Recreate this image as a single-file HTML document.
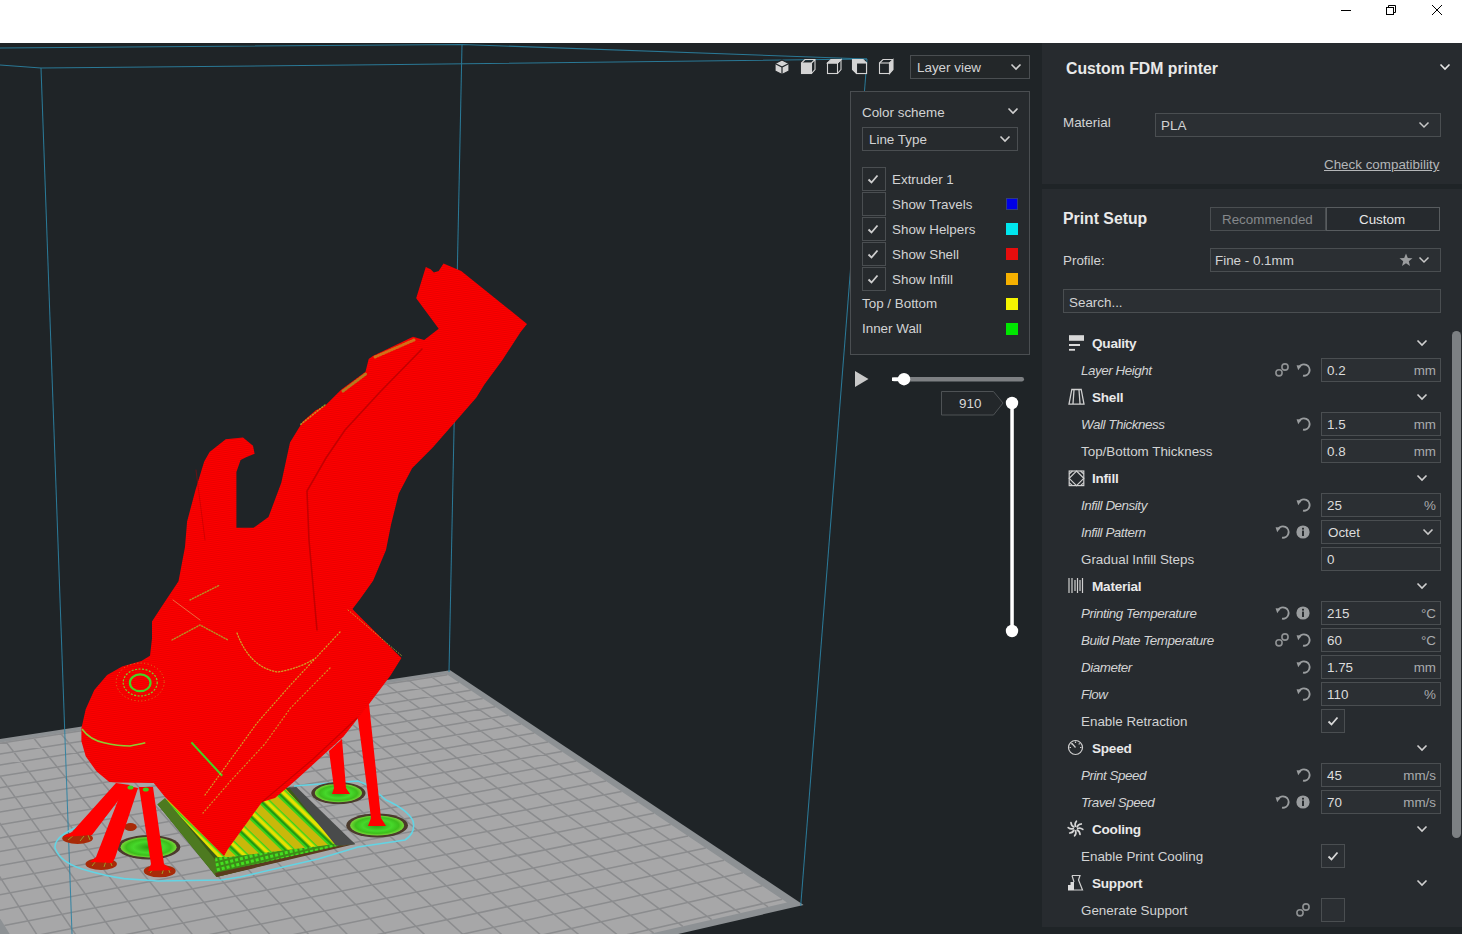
<!DOCTYPE html>
<html><head><meta charset="utf-8">
<style>
*{box-sizing:border-box;margin:0;padding:0}
html,body{width:1462px;height:934px;overflow:hidden;background:#1f2427;font-family:"Liberation Sans",sans-serif;position:relative}
#top{position:absolute;left:0;top:0;width:1462px;height:43px;background:#fff}
.sec{position:absolute;left:1042px;width:420px;background:#272b2f}
.t{position:absolute;white-space:nowrap;color:#d2d3d4;font-size:13.4px;line-height:16px;transform:translateY(1px)}
.b{font-weight:bold;color:#e9e9e9}
.i{font-style:italic;letter-spacing:-0.45px}
.box{position:absolute;border:1px solid #4a4e51;background:#2b2f33}
.ic{position:absolute;overflow:visible}
</style></head><body>
<div id="top">
<svg width="1462" height="43" style="position:absolute;left:0;top:0">
<line x1="1341" y1="10.5" x2="1351" y2="10.5" stroke="#000" stroke-width="1"/>
<rect x="1386.5" y="7.5" width="7" height="7" fill="none" stroke="#000"/>
<path d="M1388.5 7.5 V5.5 H1395.5 V12.5 H1393.5" fill="none" stroke="#000"/>
<path d="M1432 5 L1442 15 M1442 5 L1432 15" stroke="#000" stroke-width="1"/>
</svg>
</div>
<svg width="1042" height="891" viewBox="0 43 1042 891" style="position:absolute;left:0;top:43px">
<rect x="0" y="43" width="1042" height="891" fill="#1f2427"/>
<polygon points="450.2,670.3 803.6,905.0 79.1,1072.5 -110.4,755.9" fill="#8d9194"/>
<polygon points="446.4,674.1 787.0,902.4 88.6,1062.7 -98.4,757.7" fill="#a7a7a8"/>
<path d="M447.3 674.7L-98.0 758.4M458.9 682.4L-91.9 768.4M470.7 690.3L-85.6 778.5M482.8 698.5L-79.2 789.0M495.2 706.8L-72.7 799.7M507.9 715.3L-65.9 810.7M520.9 724.0L-59.0 822.0M534.3 733.0L-51.8 833.7M547.9 742.1L-44.5 845.7M561.9 751.5L-36.9 858.0M576.3 761.1L-29.2 870.7M591.0 771.0L-21.2 883.7M606.1 781.1L-12.9 897.2M621.6 791.5L-4.4 911.1M637.6 802.2L4.4 925.4M653.9 813.2L13.4 940.1M670.7 824.5L22.8 955.4M688.0 836.1L32.4 971.1M705.8 848.0L42.4 987.4M724.1 860.2L52.7 1004.2M742.9 872.8L63.3 1021.6M762.3 885.8L74.4 1039.6M782.2 899.2L85.8 1058.3M-78.6 754.7L115.1 1056.6M-50.1 750.3L153.2 1047.9M-21.9 746.0L190.6 1039.3M5.9 741.7L227.3 1030.9M33.3 737.5L263.5 1022.6M60.5 733.3L299.0 1014.4M87.3 729.2L333.9 1006.4M113.7 725.2L368.3 998.5M139.9 721.1L402.1 990.8M165.7 717.2L435.3 983.2M191.3 713.3L468.0 975.7M216.5 709.4L500.1 968.3M241.4 705.5L531.8 961.0M266.1 701.8L563.0 953.9M290.5 698.0L593.6 946.8M314.5 694.3L623.8 939.9M338.3 690.7L653.6 933.1M361.9 687.1L682.8 926.4M385.2 683.5L711.7 919.7M408.2 680.0L740.0 913.2M430.9 676.5L768.0 906.8" stroke="#8b8c8e" stroke-width="1.5" fill="none"/>

<!-- volume lines -->
<g stroke="#2c82a2" stroke-width="1.05" fill="none" opacity="0.9">
<polyline points="0,48 462,44.5 867,59"/>
<polyline points="0,65 41,68 400,64.6 867,59"/>
<line x1="41" y1="68" x2="72" y2="934"/>
<line x1="462" y1="44" x2="449" y2="672"/>
<line x1="867" y1="59" x2="800.7" y2="906"/>
</g>
<defs>
<pattern id="rp" width="4" height="2" patternUnits="userSpaceOnUse" patternTransform="rotate(-8)">
<rect width="4" height="2" fill="#ff0000"/>
<rect y="1" width="4" height="1" fill="#ea0000"/>
</pattern>
<pattern id="raftp" width="18" height="18" patternUnits="userSpaceOnUse" patternTransform="rotate(-46)">
<rect width="18" height="18" fill="#e6e000"/>
<rect x="0" width="2.5" height="18" fill="#1f9a10"/>
<rect x="6.5" width="1.5" height="18" fill="#3ad21c"/>
<rect x="8" width="8" height="18" fill="#c9b80a"/>
<rect x="16" width="2" height="18" fill="#3ad21c"/>
</pattern>
<pattern id="meshp" width="5" height="5" patternUnits="userSpaceOnUse" patternTransform="rotate(-14)">
<rect width="5" height="5" fill="#3c8c18"/>
<rect width="3" height="3" fill="#44e020"/>
</pattern>
<radialGradient id="padg">
<stop offset="0" stop-color="#2a9a12"/><stop offset="0.55" stop-color="#46d82a"/><stop offset="0.8" stop-color="#3cbe1c"/><stop offset="1" stop-color="#7ad83a"/>
</radialGradient>
</defs>
<!-- skirt outline -->
<path d="M107 817 L80 826 Q54 836 55 848 Q60 862 82 869 Q105 876 124 878.6 L158 881 L221 880 L240 877 L318 859 L358 847 L405 840 Q416 833 413 821 Q408 810 386 800 L370 786 L358 781 L294 786" fill="none" stroke="#62d4e4" stroke-width="1.6"/>
<!-- raft -->
<polygon points="157.4,804.2 216.5,877.1 337,846.4 355,843.9 290.3,787.5" fill="#3b5a18"/>
<polygon points="165,800 222,862 337,844 286,789" fill="url(#raftp)"/>
<polygon points="157.4,804.2 216.5,877.1 222,868 165,798" fill="#4d7a20"/>
<polygon points="215,857 229,857 336,844 340,846.4 216.5,877.1" fill="url(#meshp)"/>
<polygon points="215,873 216.5,877.1 355,843.9 338,846" fill="#5a3a1e"/>
<polygon points="288.9,787.5 296.4,787 355.3,844.2 336,845.8" fill="#494b4b"/>
<!-- pads -->
<g>
<ellipse cx="148.6" cy="847.2" rx="31.7" ry="12.2" fill="#4b3a2c"/>
<ellipse cx="148.6" cy="847.2" rx="28" ry="10.2" fill="url(#padg)"/>
<ellipse cx="338.4" cy="793.1" rx="27.2" ry="11" fill="#4b3a2c"/>
<ellipse cx="338.4" cy="793.1" rx="23.6" ry="9.2" fill="url(#padg)"/>
<ellipse cx="377.1" cy="825.4" rx="30.9" ry="12" fill="#4b3a2c"/>
<ellipse cx="377.1" cy="825.4" rx="27" ry="10" fill="url(#padg)"/>
</g>
<!-- feet -->
<g fill="#a82a08">
<ellipse cx="77.6" cy="838.2" rx="15.3" ry="5.9"/>
<ellipse cx="101.2" cy="864" rx="15.7" ry="5.9"/>
<ellipse cx="159.7" cy="871" rx="16" ry="6.3"/>
<ellipse cx="130.5" cy="827" rx="6.3" ry="4"/>
</g>
<g fill="none" stroke="#9acd32" stroke-width="1" opacity="0.7">
<path d="M68 840 L74 835 M80 841 L84 836 M90 840 L88 835"/>
<path d="M92 866 L96 861 M104 867 L106 861 M112 866 L110 861"/>
<path d="M150 873 L154 868 M162 874 L164 868 M170 873 L168 868"/>
</g>
<!-- legs -->
<g fill="#ff0000">
<polygon points="116,783 130,785 92,835 63,837 72,832"/>
<polygon points="124,785 138,788 115,858 112,863 90,862 96,857"/>
<polygon points="139,787 153,787 164,864 172,870 148,871 151,864"/>
<polygon points="357,712 369,704 381,818 386,826 368,826 371,818"/>
<polygon points="329,751 342,739 346,788 350,794 332,794 334,788"/>
</g>
<g fill="#3ad21c"><ellipse cx="130.5" cy="787.4" rx="3" ry="2"/><ellipse cx="145.8" cy="789.5" rx="3" ry="2"/></g>
<!-- main body -->
<polygon fill="url(#rp)" points="243,437.6 253,445.7 254.6,453.7 246.6,457 240.6,460 236.4,472 236.4,527.8 253.5,527.8 268.5,517 281.3,482.8 290,442.4 302.8,421.6 315.7,410.3 325.3,405.5 341.4,389.4 365.5,371.8 368.7,358.9 372.8,356 400,342.9 413,336.7 424.2,340 438.7,328.7 416.2,298.2 425.8,266.9 430.6,269.3 433.9,272.5 438.7,270.9 443.5,263.6 461.2,270.9 527,323.9 520.6,331.9 502.1,360.5 484.4,384.6 476.4,397.5 455.5,421.6 433,447.3 412.1,468.2 398.8,493.4 391.1,524.3 386,550 373.1,580.8 360.3,598.8 352.5,609.1 355,611.7 401.4,658 390.7,675.3 369.5,703.6 360.1,715.4 343.6,736.6 307,770 296,780 275,798 262,802 228,849 224,856 165,797 153.7,783 116,782.5 109.3,782 96.4,771.3 85.7,756.3 81.4,741.3 81.4,728.5 85.7,709.2 94.3,690 107.1,675 122.1,666.4 141.4,661 150,655.7 152,638.5 152,621.4 161.4,607 178.5,581.3 185,547 187.1,521.4 195.7,489.3 204.2,461.4 209.6,452 225.7,439.2"/>
<!-- head details -->
<g fill="none">
<ellipse cx="140.2" cy="682.8" rx="10.3" ry="8.4" stroke="#44d424" stroke-width="2.2"/>
<ellipse cx="140.2" cy="682.5" rx="17" ry="13.5" stroke="#7ccf2a" stroke-width="1.2" stroke-dasharray="2 1.5"/>
<ellipse cx="140.2" cy="682" rx="24" ry="19" stroke="#b8c830" stroke-width="0.8" stroke-dasharray="1 2.5" opacity="0.8"/>
<path d="M82 729 Q90 740 104 742.7 Q118 746 130 746 Q140 744 145.3 742.7" stroke="#8ccc30" stroke-width="1.6"/>
<path d="M191.4 742.4 L222.2 775.8" stroke="#44d424" stroke-width="2"/>
</g>
<!-- body details -->
<g fill="none" stroke-linecap="round">
<path d="M422 349 L380 392 L345 430 L326 458 L307 491 L309 540 L317 630" stroke="#b80000" stroke-width="1.6" opacity="0.8"/>
<path d="M375 357 L414 340" stroke="#b8c828" stroke-width="3" stroke-dasharray="1 2" opacity="0.55"/>
<path d="M343 391 L367 373" stroke="#8ccc30" stroke-width="3" stroke-dasharray="1.2 1.8" opacity="0.6"/>
<path d="M325 405 L300 425" stroke="#b8c828" stroke-width="1.6" stroke-dasharray="1 2" opacity="0.7"/>
<path d="M340 632 L290.5 685 L257 723 L231 759 L205 795" stroke="#c8c830" stroke-width="1.2" stroke-dasharray="1 2.2" opacity="0.8"/>
<path d="M330 668 L290.5 708 L264.8 744 L231.4 780 L203 813" stroke="#c8c830" stroke-width="1.2" stroke-dasharray="1 2.5" opacity="0.7"/>
<path d="M237 633 Q250 668 278 672 Q300 668 314 659" stroke="#c8c830" stroke-width="1.3" stroke-dasharray="1.2 1.8" opacity="0.8"/>
<path d="M348 610 L402 656" stroke="#c8c830" stroke-width="1" stroke-dasharray="1 2" opacity="0.7"/>
<path d="M357 718 L312 760 L262 802" stroke="#b00000" stroke-width="1.2" opacity="0.6"/>
<path d="M190 600 L220 585 M172 640 L200 625 L228 640" stroke="#9ccc30" stroke-width="1.4" stroke-dasharray="1.2 1.6" opacity="0.7"/>
<path d="M173 600 L200 620" stroke="#e0e080" stroke-width="0.8" opacity="0.6"/>
<path d="M196 470 L205 540" stroke="#b00000" stroke-width="1" opacity="0.5"/>
</g>

</svg>
<!-- view toolbar -->
<svg class="ic" style="left:770px;top:55px" width="130" height="24">
<g stroke="#1f2427" stroke-width="1.2">
<path d="M12 5 L19 8.5 L19 16 L12 19.5 L5 16 L5 8.5 Z" fill="#d4d4d4"/>
<path d="M5 8.5 L12 12 L19 8.5 M12 12 V19.5" fill="none"/>
</g>
<g stroke="#d4d4d4" stroke-width="1.1" fill="none">
<rect x="31.5" y="8" width="10" height="10.5" fill="#d4d4d4"/>
<path d="M31.5 8 L35 4.5 H45 V14.5 L41.5 18.5 M41.5 8 L45 4.5"/>
<rect x="57.5" y="8" width="10" height="10.5"/>
<path d="M57.5 8 L61 4.5 H71 L67.5 8 Z" fill="#d4d4d4"/>
<path d="M67.5 8 L71 4.5 V14.5 L67.5 18.5"/>
<rect x="86.5" y="8" width="10" height="10.5"/>
<path d="M82.5 4.5 H93 L96.5 8 V18.5 H86.5 L82.5 14.5 Z" fill="#d4d4d4"/>
<rect x="86.5" y="8" width="10" height="10.5" fill="#1f2427"/>
<rect x="109.5" y="8" width="10" height="10.5"/>
<path d="M119.5 8 L123 4.5 V14.5 L119.5 18.5 Z" fill="#d4d4d4"/>
<path d="M109.5 8 L113 4.5 H123"/>
</g>
</svg>
<div class="box" style="left:910px;top:55px;width:120px;height:24px;background:#232729"></div>
<div class="t" style="left:917px;top:59px">Layer view</div>
<svg class="ic" style="left:1010px;top:63px" width="12" height="8"><path d="M1.5 1.5 L6 6 L10.5 1.5" stroke="#d0d0d0" stroke-width="1.6" fill="none"/></svg>
<!-- color scheme panel -->
<div class="box" style="left:850px;top:91px;width:180px;height:264px;background:#262a2d"></div>
<div class="t" style="left:862px;top:104px">Color scheme</div>
<svg class="ic" style="left:1007px;top:107px" width="12" height="8"><path d="M1.5 1.5 L6 6 L10.5 1.5" stroke="#d0d0d0" stroke-width="1.6" fill="none"/></svg>
<div class="box" style="left:862px;top:127px;width:156px;height:24px;background:#262a2d"></div>
<div class="t" style="left:869px;top:131px">Line Type</div>
<svg class="ic" style="left:999px;top:135px" width="12" height="8"><path d="M1.5 1.5 L6 6 L10.5 1.5" stroke="#d0d0d0" stroke-width="1.6" fill="none"/></svg>
<div class="box" style="left:862px;top:167px;width:24px;height:24px;background:#262a2d"></div>
<div class="box" style="left:862px;top:192px;width:24px;height:24px;background:#262a2d"></div>
<div class="box" style="left:862px;top:217px;width:24px;height:24px;background:#262a2d"></div>
<div class="box" style="left:862px;top:242px;width:24px;height:24px;background:#262a2d"></div>
<div class="box" style="left:862px;top:267px;width:24px;height:24px;background:#262a2d"></div>
<svg class="ic" style="left:867px;top:173px" width="12" height="12"><path d="M1.5 6.5 L4.5 9.5 L10.5 2.5" stroke="#cfcfcf" stroke-width="1.8" fill="none"/></svg>
<svg class="ic" style="left:867px;top:223px" width="12" height="12"><path d="M1.5 6.5 L4.5 9.5 L10.5 2.5" stroke="#cfcfcf" stroke-width="1.8" fill="none"/></svg>
<svg class="ic" style="left:867px;top:248px" width="12" height="12"><path d="M1.5 6.5 L4.5 9.5 L10.5 2.5" stroke="#cfcfcf" stroke-width="1.8" fill="none"/></svg>
<svg class="ic" style="left:867px;top:273px" width="12" height="12"><path d="M1.5 6.5 L4.5 9.5 L10.5 2.5" stroke="#cfcfcf" stroke-width="1.8" fill="none"/></svg>
<div class="t" style="left:892px;top:171px">Extruder 1</div>
<div class="t" style="left:892px;top:196px">Show Travels</div>
<div class="t" style="left:892px;top:221px">Show Helpers</div>
<div class="t" style="left:892px;top:246px">Show Shell</div>
<div class="t" style="left:892px;top:271px">Show Infill</div>
<div class="t" style="left:862px;top:295px">Top / Bottom</div>
<div class="t" style="left:862px;top:320px">Inner Wall</div>
<div style="position:absolute;left:1006px;top:198px;width:12px;height:12px;background:#0000e6;border:1px solid #303c80"></div>
<div style="position:absolute;left:1006px;top:223px;width:12px;height:12px;background:#00e6ee"></div>
<div style="position:absolute;left:1006px;top:248px;width:12px;height:12px;background:#e60d0d"></div>
<div style="position:absolute;left:1006px;top:273px;width:12px;height:12px;background:#f5b000"></div>
<div style="position:absolute;left:1006px;top:298px;width:12px;height:12px;background:#f5f500"></div>
<div style="position:absolute;left:1006px;top:323px;width:12px;height:12px;background:#00e600"></div>
<!-- slider -->
<svg class="ic" style="left:850px;top:365px" width="185" height="275">
<path d="M5 6 L18.5 14 L5 22 Z" fill="#c9c9c9"/>
<rect x="42" y="12" width="132" height="4.5" rx="2.2" fill="#7d8083"/>
<rect x="42" y="12.5" width="12" height="3.5" fill="#ffffff"/>
<circle cx="54" cy="14.2" r="6.2" fill="#ffffff"/>
<path d="M91.5 26.5 H143.5 L153 38 L143.5 50 H91.5 Z" fill="#23272a" stroke="#4e5255"/>
<rect x="160.3" y="38" width="3.5" height="228" fill="#ffffff"/>
<circle cx="162" cy="38" r="6.2" fill="#ffffff"/>
<circle cx="162" cy="266" r="6.2" fill="#ffffff"/>
</svg>
<div class="t" style="left:959px;top:395px;color:#d8d8d8">910</div>

<div id="side">
 <div class="sec" style="top:43px;height:141px"></div>
 <div class="sec" style="top:189px;height:738px"></div>
 <div class="t b" style="left:1066px;top:60px;font-size:15.8px;letter-spacing:0">Custom FDM printer</div>
 <svg class="ic" style="left:1439px;top:63px" width="12" height="8"><path d="M1.5 1.5 L6 6 L10.5 1.5" stroke="#e6e6e6" stroke-width="1.6" fill="none"/></svg>
 <div class="t" style="left:1063px;top:114px">Material</div>
 <div class="box" style="left:1155px;top:113px;width:286px;height:24px"></div>
 <div class="t" style="left:1161px;top:117px">PLA</div>
 <svg class="ic" style="left:1418px;top:121px" width="12" height="8"><path d="M1.5 1.5 L6 6 L10.5 1.5" stroke="#c8c8c8" stroke-width="1.5" fill="none"/></svg>
 <div class="t" style="left:1324px;top:156px;color:#b4b6b8;text-decoration:underline">Check compatibility</div>

 <div class="t b" style="left:1063px;top:210px;font-size:15.8px;letter-spacing:0">Print Setup</div>
 <div class="box" style="left:1210px;top:207px;width:116px;height:24px;background:#2a2e32"></div>
 <div class="box" style="left:1326px;top:207px;width:114px;height:24px;background:#262a2e;border-color:#585c5f"></div>
 <div class="t" style="left:1222px;top:211px;color:#85888b">Recommended</div>
 <div class="t" style="left:1359px;top:211px;color:#e8e8e8">Custom</div>
 <div class="t" style="left:1063px;top:252px">Profile:</div>
 <div class="box" style="left:1210px;top:248px;width:231px;height:24px"></div>
 <div class="t" style="left:1215px;top:252px">Fine - 0.1mm</div>
 <svg class="ic" style="left:1399px;top:253px" width="14" height="14"><path d="M7 0.5 L8.8 5 L13.5 5.2 L9.8 8.2 L11 13 L7 10.3 L3 13 L4.2 8.2 L0.5 5.2 L5.2 5 Z" fill="#9a9c9e"/></svg>
 <svg class="ic" style="left:1418px;top:256px" width="12" height="8"><path d="M1.5 1.5 L6 6 L10.5 1.5" stroke="#c8c8c8" stroke-width="1.5" fill="none"/></svg>
 <div class="box" style="left:1063px;top:289px;width:378px;height:24px"></div>
 <div class="t" style="left:1069px;top:294px">Search...</div>

 <!-- scrollbar -->
 <div style="position:absolute;left:1452px;top:331px;width:9px;height:507px;background:#7c8083;border-radius:5px"></div>
<svg class="ic" style="left:1067px;top:334px" width="18" height="18"><rect x="2" y="1.2" width="15" height="5.6" fill="#d8d8d8"/><rect x="2" y="10" width="11" height="2" fill="#dcdcdc"/><rect x="2" y="14.9" width="6" height="1.8" fill="#dcdcdc"/></svg>
<div class="t b" style="left:1092px;top:335px;font-size:13.6px;letter-spacing:-0.25px">Quality</div>
<svg class="ic" style="left:1416px;top:339px" width="12" height="8"><path d="M1.5 1.5 L6 6 L10.5 1.5" stroke="#d0d0d0" stroke-width="1.6" fill="none"/></svg>
<div class="t i" style="left:1081px;top:362px">Layer Height</div>
<svg class="ic" style="left:1274px;top:362px" width="16" height="16"><circle cx="5" cy="10.8" r="3.1" stroke="#8e9193" stroke-width="1.6" fill="none"/><circle cx="11" cy="5" r="3.1" stroke="#8e9193" stroke-width="1.6" fill="none"/></svg>
<svg class="ic" style="left:1295px;top:362px" width="16" height="16"><path d="M4.2 5.2 A5.6 5.6 0 1 1 8 13.6" stroke="#9a9d9f" stroke-width="1.9" fill="none"/><path d="M1.6 3.2 L6.6 3.6 L3.2 8.2 Z" fill="#9a9d9f"/></svg>
<div class="box" style="left:1321px;top:358px;width:120px;height:24px"></div>
<div class="t" style="left:1327px;top:362px;color:#dcdcdc">0.2</div>
<div class="t" style="right:26px;top:362px;color:#a9abad">mm</div>
<svg class="ic" style="left:1067px;top:388px" width="18" height="18"><g stroke="#d0d0d0" stroke-width="1.3" fill="none"><path d="M4.2 1.5 H14.8 M4.8 1.5 L2 16.2 H17 L14.2 1.5 M7 2 L6 15.5 M12 2 L13 15.5"/></g></svg>
<div class="t b" style="left:1092px;top:389px;font-size:13.6px;letter-spacing:-0.25px">Shell</div>
<svg class="ic" style="left:1416px;top:393px" width="12" height="8"><path d="M1.5 1.5 L6 6 L10.5 1.5" stroke="#d0d0d0" stroke-width="1.6" fill="none"/></svg>
<div class="t i" style="left:1081px;top:416px">Wall Thickness</div>
<svg class="ic" style="left:1295px;top:416px" width="16" height="16"><path d="M4.2 5.2 A5.6 5.6 0 1 1 8 13.6" stroke="#9a9d9f" stroke-width="1.9" fill="none"/><path d="M1.6 3.2 L6.6 3.6 L3.2 8.2 Z" fill="#9a9d9f"/></svg>
<div class="box" style="left:1321px;top:412px;width:120px;height:24px"></div>
<div class="t" style="left:1327px;top:416px;color:#dcdcdc">1.5</div>
<div class="t" style="right:26px;top:416px;color:#a9abad">mm</div>
<div class="t" style="left:1081px;top:443px">Top/Bottom Thickness</div>
<div class="box" style="left:1321px;top:439px;width:120px;height:24px"></div>
<div class="t" style="left:1327px;top:443px;color:#dcdcdc">0.8</div>
<div class="t" style="right:26px;top:443px;color:#a9abad">mm</div>
<svg class="ic" style="left:1067px;top:469px" width="18" height="18"><g stroke="#d0d0d0" stroke-width="1.2" fill="none"><rect x="2.2" y="2" width="14.6" height="14.6"/><path d="M9.5 2 L16.8 9.3 L9.5 16.6 L2.2 9.3 Z M2.2 5 L5.5 2 M13.5 2 L16.8 5 M16.8 13.6 L13.5 16.6 M5.5 16.6 L2.2 13.6"/></g></svg>
<div class="t b" style="left:1092px;top:470px;font-size:13.6px;letter-spacing:-0.25px">Infill</div>
<svg class="ic" style="left:1416px;top:474px" width="12" height="8"><path d="M1.5 1.5 L6 6 L10.5 1.5" stroke="#d0d0d0" stroke-width="1.6" fill="none"/></svg>
<div class="t i" style="left:1081px;top:497px">Infill Density</div>
<svg class="ic" style="left:1295px;top:497px" width="16" height="16"><path d="M4.2 5.2 A5.6 5.6 0 1 1 8 13.6" stroke="#9a9d9f" stroke-width="1.9" fill="none"/><path d="M1.6 3.2 L6.6 3.6 L3.2 8.2 Z" fill="#9a9d9f"/></svg>
<div class="box" style="left:1321px;top:493px;width:120px;height:24px"></div>
<div class="t" style="left:1327px;top:497px;color:#dcdcdc">25</div>
<div class="t" style="right:26px;top:497px;color:#a9abad">%</div>
<div class="t i" style="left:1081px;top:524px">Infill Pattern</div>
<svg class="ic" style="left:1274px;top:524px" width="16" height="16"><path d="M4.2 5.2 A5.6 5.6 0 1 1 8 13.6" stroke="#9a9d9f" stroke-width="1.9" fill="none"/><path d="M1.6 3.2 L6.6 3.6 L3.2 8.2 Z" fill="#9a9d9f"/></svg>
<svg class="ic" style="left:1295px;top:524px" width="16" height="16"><circle cx="8" cy="8" r="6.6" fill="#9a9d9f"/><rect x="7" y="6.6" width="2" height="5.4" fill="#2a2e31"/><rect x="7" y="3.8" width="2" height="1.8" fill="#2a2e31"/></svg>
<div class="box" style="left:1321px;top:520px;width:120px;height:24px"></div>
<div class="t" style="left:1328px;top:524px;color:#dcdcdc">Octet</div>
<svg class="ic" style="left:1422px;top:528px" width="12" height="8"><path d="M1.5 1.5 L6 6 L10.5 1.5" stroke="#c8c8c8" stroke-width="1.6" fill="none"/></svg>
<div class="t" style="left:1081px;top:551px">Gradual Infill Steps</div>
<div class="box" style="left:1321px;top:547px;width:120px;height:24px"></div>
<div class="t" style="left:1327px;top:551px;color:#dcdcdc">0</div>
<svg class="ic" style="left:1067px;top:577px" width="18" height="18"><path d="M2 1 V16 M5 1 V16 M8 3 V14 M10.5 1 V16 M13 3 V14 M15.5 1 V16" stroke="#d0d0d0" stroke-width="1.2"/></svg>
<div class="t b" style="left:1092px;top:578px;font-size:13.6px;letter-spacing:-0.25px">Material</div>
<svg class="ic" style="left:1416px;top:582px" width="12" height="8"><path d="M1.5 1.5 L6 6 L10.5 1.5" stroke="#d0d0d0" stroke-width="1.6" fill="none"/></svg>
<div class="t i" style="left:1081px;top:605px">Printing Temperature</div>
<svg class="ic" style="left:1274px;top:605px" width="16" height="16"><path d="M4.2 5.2 A5.6 5.6 0 1 1 8 13.6" stroke="#9a9d9f" stroke-width="1.9" fill="none"/><path d="M1.6 3.2 L6.6 3.6 L3.2 8.2 Z" fill="#9a9d9f"/></svg>
<svg class="ic" style="left:1295px;top:605px" width="16" height="16"><circle cx="8" cy="8" r="6.6" fill="#9a9d9f"/><rect x="7" y="6.6" width="2" height="5.4" fill="#2a2e31"/><rect x="7" y="3.8" width="2" height="1.8" fill="#2a2e31"/></svg>
<div class="box" style="left:1321px;top:601px;width:120px;height:24px"></div>
<div class="t" style="left:1327px;top:605px;color:#dcdcdc">215</div>
<div class="t" style="right:26px;top:605px;color:#a9abad">°C</div>
<div class="t i" style="left:1081px;top:632px">Build Plate Temperature</div>
<svg class="ic" style="left:1274px;top:632px" width="16" height="16"><circle cx="5" cy="10.8" r="3.1" stroke="#8e9193" stroke-width="1.6" fill="none"/><circle cx="11" cy="5" r="3.1" stroke="#8e9193" stroke-width="1.6" fill="none"/></svg>
<svg class="ic" style="left:1295px;top:632px" width="16" height="16"><path d="M4.2 5.2 A5.6 5.6 0 1 1 8 13.6" stroke="#9a9d9f" stroke-width="1.9" fill="none"/><path d="M1.6 3.2 L6.6 3.6 L3.2 8.2 Z" fill="#9a9d9f"/></svg>
<div class="box" style="left:1321px;top:628px;width:120px;height:24px"></div>
<div class="t" style="left:1327px;top:632px;color:#dcdcdc">60</div>
<div class="t" style="right:26px;top:632px;color:#a9abad">°C</div>
<div class="t i" style="left:1081px;top:659px">Diameter</div>
<svg class="ic" style="left:1295px;top:659px" width="16" height="16"><path d="M4.2 5.2 A5.6 5.6 0 1 1 8 13.6" stroke="#9a9d9f" stroke-width="1.9" fill="none"/><path d="M1.6 3.2 L6.6 3.6 L3.2 8.2 Z" fill="#9a9d9f"/></svg>
<div class="box" style="left:1321px;top:655px;width:120px;height:24px"></div>
<div class="t" style="left:1327px;top:659px;color:#dcdcdc">1.75</div>
<div class="t" style="right:26px;top:659px;color:#a9abad">mm</div>
<div class="t i" style="left:1081px;top:686px">Flow</div>
<svg class="ic" style="left:1295px;top:686px" width="16" height="16"><path d="M4.2 5.2 A5.6 5.6 0 1 1 8 13.6" stroke="#9a9d9f" stroke-width="1.9" fill="none"/><path d="M1.6 3.2 L6.6 3.6 L3.2 8.2 Z" fill="#9a9d9f"/></svg>
<div class="box" style="left:1321px;top:682px;width:120px;height:24px"></div>
<div class="t" style="left:1327px;top:686px;color:#dcdcdc">110</div>
<div class="t" style="right:26px;top:686px;color:#a9abad">%</div>
<div class="t" style="left:1081px;top:713px">Enable Retraction</div>
<div class="box" style="left:1321px;top:709px;width:24px;height:24px"></div>
<svg class="ic" style="left:1327px;top:715px" width="12" height="12"><path d="M1.5 6.5 L4.5 9.5 L10.5 2.5" stroke="#d8d8d8" stroke-width="1.8" fill="none"/></svg>
<svg class="ic" style="left:1067px;top:739px" width="18" height="18"><circle cx="8.5" cy="8.5" r="7" stroke="#cfcfcf" stroke-width="1.2" fill="none"/><path d="M8.5 8.5 L5 4.5 M8.5 2.5 V4 M2.5 8.5 H4 M13 8.5 H14.5 M4.3 4.3 L5.3 5.3 M12.7 4.3 L11.7 5.3" stroke="#cfcfcf" stroke-width="1.2"/></svg>
<div class="t b" style="left:1092px;top:740px;font-size:13.6px;letter-spacing:-0.25px">Speed</div>
<svg class="ic" style="left:1416px;top:744px" width="12" height="8"><path d="M1.5 1.5 L6 6 L10.5 1.5" stroke="#d0d0d0" stroke-width="1.6" fill="none"/></svg>
<div class="t i" style="left:1081px;top:767px">Print Speed</div>
<svg class="ic" style="left:1295px;top:767px" width="16" height="16"><path d="M4.2 5.2 A5.6 5.6 0 1 1 8 13.6" stroke="#9a9d9f" stroke-width="1.9" fill="none"/><path d="M1.6 3.2 L6.6 3.6 L3.2 8.2 Z" fill="#9a9d9f"/></svg>
<div class="box" style="left:1321px;top:763px;width:120px;height:24px"></div>
<div class="t" style="left:1327px;top:767px;color:#dcdcdc">45</div>
<div class="t" style="right:26px;top:767px;color:#a9abad">mm/s</div>
<div class="t i" style="left:1081px;top:794px">Travel Speed</div>
<svg class="ic" style="left:1274px;top:794px" width="16" height="16"><path d="M4.2 5.2 A5.6 5.6 0 1 1 8 13.6" stroke="#9a9d9f" stroke-width="1.9" fill="none"/><path d="M1.6 3.2 L6.6 3.6 L3.2 8.2 Z" fill="#9a9d9f"/></svg>
<svg class="ic" style="left:1295px;top:794px" width="16" height="16"><circle cx="8" cy="8" r="6.6" fill="#9a9d9f"/><rect x="7" y="6.6" width="2" height="5.4" fill="#2a2e31"/><rect x="7" y="3.8" width="2" height="1.8" fill="#2a2e31"/></svg>
<div class="box" style="left:1321px;top:790px;width:120px;height:24px"></div>
<div class="t" style="left:1327px;top:794px;color:#dcdcdc">70</div>
<div class="t" style="right:26px;top:794px;color:#a9abad">mm/s</div>
<svg class="ic" style="left:1067px;top:820px" width="18" height="18"><g stroke="#d6d6d6" stroke-width="1.7" fill="none" stroke-linecap="round"><path d="M8.5 6.2 Q7.3 3.8 9.4 1.2" transform="rotate(0 8.5 8.5)"/><path d="M8.5 6.2 Q7.3 3.8 9.4 1.2" transform="rotate(45 8.5 8.5)"/><path d="M8.5 6.2 Q7.3 3.8 9.4 1.2" transform="rotate(90 8.5 8.5)"/><path d="M8.5 6.2 Q7.3 3.8 9.4 1.2" transform="rotate(135 8.5 8.5)"/><path d="M8.5 6.2 Q7.3 3.8 9.4 1.2" transform="rotate(180 8.5 8.5)"/><path d="M8.5 6.2 Q7.3 3.8 9.4 1.2" transform="rotate(225 8.5 8.5)"/><path d="M8.5 6.2 Q7.3 3.8 9.4 1.2" transform="rotate(270 8.5 8.5)"/><path d="M8.5 6.2 Q7.3 3.8 9.4 1.2" transform="rotate(315 8.5 8.5)"/></g></svg>
<div class="t b" style="left:1092px;top:821px;font-size:13.6px;letter-spacing:-0.25px">Cooling</div>
<svg class="ic" style="left:1416px;top:825px" width="12" height="8"><path d="M1.5 1.5 L6 6 L10.5 1.5" stroke="#d0d0d0" stroke-width="1.6" fill="none"/></svg>
<div class="t" style="left:1081px;top:848px">Enable Print Cooling</div>
<div class="box" style="left:1321px;top:844px;width:24px;height:24px"></div>
<svg class="ic" style="left:1327px;top:850px" width="12" height="12"><path d="M1.5 6.5 L4.5 9.5 L10.5 2.5" stroke="#d8d8d8" stroke-width="1.8" fill="none"/></svg>
<svg class="ic" style="left:1067px;top:874px" width="18" height="18"><path d="M1 16.5 V11 H3.5 V8 H7 V16.5 Z" fill="#dcdcdc"/><path d="M5 1.5 H13 L11.5 6 L15.5 16 H7 M5 1.5 L7 8" stroke="#d0d0d0" stroke-width="1.2" fill="none"/></svg>
<div class="t b" style="left:1092px;top:875px;font-size:13.6px;letter-spacing:-0.25px">Support</div>
<svg class="ic" style="left:1416px;top:879px" width="12" height="8"><path d="M1.5 1.5 L6 6 L10.5 1.5" stroke="#d0d0d0" stroke-width="1.6" fill="none"/></svg>
<div class="t" style="left:1081px;top:902px">Generate Support</div>
<svg class="ic" style="left:1295px;top:902px" width="16" height="16"><circle cx="5" cy="10.8" r="3.1" stroke="#8e9193" stroke-width="1.6" fill="none"/><circle cx="11" cy="5" r="3.1" stroke="#8e9193" stroke-width="1.6" fill="none"/></svg>
<div class="box" style="left:1321px;top:898px;width:24px;height:24px"></div>
</div>

</body></html>
